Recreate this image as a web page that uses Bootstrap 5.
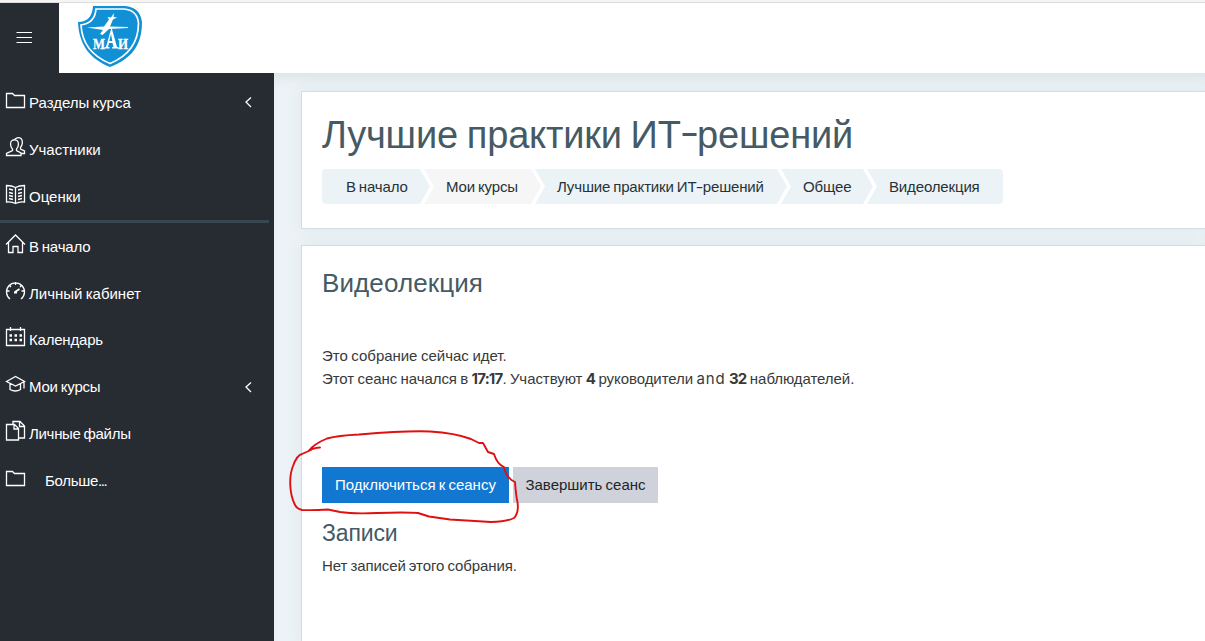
<!DOCTYPE html>
<html lang="ru">
<head>
<meta charset="utf-8">
<meta name="viewport" content="width=device-width, initial-scale=1">
<title>Видеолекция</title>
<link href="https://cdn.jsdelivr.net/npm/bootstrap@5.3.0/dist/css/bootstrap.min.css" rel="stylesheet">
<style>
body{font-family:"Liberation Sans",Arial,sans-serif;font-size:15px;line-height:23px;color:#373a3c;background:#ecf3f7;height:641px}
.topline{height:3px;background:#f5f5f5;border-bottom:1px solid #dcdcdc}
.site-head{height:70px}
.menu-btn{width:59px;background:#272b32;padding:9px 0 0 16px}
.brand-logo{margin:2px 0 0 18px}
.side{width:274px;background:#272b32;padding-top:6px}
.side-link{height:46.9px;padding:0 21px 0 5px;color:#fff;text-decoration:none}
.side-link .ico{width:21px;height:22px;margin:-5px 3px 0 0;flex:none}
.ico,.line-ico{fill:none;stroke:#fff;stroke-width:1.3}
.side-rule{height:3px;width:269px;background:#37474f}
.snug{word-spacing:-1px}
.tight{letter-spacing:-.2px}
.tighter{letter-spacing:-.3px}
.main-area{padding:18px 0 0 27px;box-shadow:inset 0 12px 14px -8px rgba(60,80,90,.1);min-width:0}
.panel{background:#fff;border:1px solid #d3dce2;border-right:0;box-shadow:0 0 16px rgba(60,90,105,.07);padding-left:20px;white-space:nowrap}
.panel-head{height:138px}
.panel-body{border-bottom:0}
h1,h2,h3{color:#455a64;font-weight:400;margin:0}
h1{font-size:38px;line-height:44px;padding-top:21px;letter-spacing:-.18px;word-spacing:-1.5px}
h2{font-size:26px;line-height:30px;padding-top:22px;letter-spacing:.1px}
h3{font-size:23px;line-height:28px;margin-top:16px;letter-spacing:-.15px}
.wide-dash{display:inline-block;transform:scaleX(1.5);margin:0 .05em}
h1 .wide-dash{transform:translateY(-3px) scaleX(1.5)}
.crumbs{margin-top:12px;height:35px;color:#263238}
.crumb{height:35px;line-height:35px;background:#ecf3f7;clip-path:polygon(0 0,calc(100% - 10px) 0,100% 50%,calc(100% - 10px) 100%,0 100%,10px 50%);margin-right:-6px;padding-left:22px;flex:none;letter-spacing:-.15px;word-spacing:-1px}
.crumb:first-child{clip-path:polygon(0 0,calc(100% - 10px) 0,100% 50%,calc(100% - 10px) 100%,0 100%);border-radius:4px 0 0 4px;padding-left:24px}
.crumb:last-child{clip-path:polygon(0 0,100% 0,100% 100%,0 100%,10px 50%);border-radius:0 4px 4px 0;margin-right:0}
.status{margin-top:46px}
.line-start{letter-spacing:-.03px;word-spacing:-.5px}
.line-stats{letter-spacing:-.06px;word-spacing:-.75px}
.status b,.latin{font-family:Inter,sans-serif}
.status b{font-weight:700;letter-spacing:-.8px}
.latin{letter-spacing:.9px}
.actions{margin-top:77px;gap:4px}
.actions .btn{height:36px;padding:0;font-size:15px;line-height:34px;border-radius:0;word-spacing:-1px}
.join{width:187px;background:#1177d1;color:#fff}
.finish{width:145px;background:#cfd2da;color:#212529}
.records{margin-top:7px;letter-spacing:-.08px;word-spacing:-1px}
.marker{left:280px;top:420px}
</style>
</head>
<body class="d-flex flex-column overflow-hidden">
<div class="topline flex-shrink-0"></div>
<header class="site-head d-flex bg-white flex-shrink-0">
  <div class="menu-btn"><svg class="line-ico" width="16" height="50"><path d="M.5 20.5h15.5M.5 25.5h15.5M.5 30.5h15.5" stroke-width="1"/></svg></div>
  <svg class="brand-logo" width="66" height="64" viewBox="0 0 66 64">
    <path fill="#1190d6" d="M16 1H48Q63 2 65 17C65 41 54 54 33 62C13 54 2 40 1 17Q15 17 16 1Z"/>
    <path fill="none" stroke="#fff" stroke-width="1.7" d="M19 4H47Q60 5 61.5 18C61.500 39 51 51 33 58.500C15 51 5 39 4 20Q18 18 19 4Z"/>
    <path fill="#fff" d="M10 22.500L27 21.500L32 14.500L30.500 12L34 12.500L37 8L36.500 12L40 12.500L36 14.500L33 21.500L51 22V23L32 24L25.500 30L23 29L26 25Z"/>
    <path fill="#fff" fill-rule="evenodd" d="M34.500 22.500L40 42H41.500V43.500H35V42H36.500L35.500 38H32L31 42H32.500V43.500H27.500V42H29ZM34 29L32.300 36H35.300Z"/>
    <g fill="#fff" stroke="#fff" stroke-width=".3" font-family="Liberation Serif,serif" font-weight="700"><text x="16" y="43.500" font-size="15" textLength="12" lengthAdjust="spacingAndGlyphs">М</text><text x="41" y="43.500" font-size="15" textLength="10" lengthAdjust="spacingAndGlyphs">И</text></g>
  </svg>
</header>
<div class="d-flex flex-grow-1">
  <nav class="side flex-shrink-0">
    <a class="side-link d-flex align-items-center" href="#"><svg class="ico" viewBox="0 0 21 22"><path d="M1.500 4.500H7.500L9.500 6.500H19.500V18.500H1.500Z"/></svg><span class="snug">Разделы курса</span><svg class="line-ico ms-auto" width="10" height="12"><path d="M8 1.500L3 6L8 11"/></svg></a>
    <a class="side-link d-flex align-items-center" href="#"><svg class="ico" viewBox="0 0 21 22"><path d="M1.500 19.500V17.500L7.500 14.500V13C5 10.500 5 5.500 7 4.500Q9.500 3 12 4.500C14 6 14 10.500 11.500 13V14.500L16 17V19.500ZM9.500 3.500Q13 .500 16 2.500C18.500 5 17 10 15.500 11.500V13L19.500 15V17.500H16"/></svg><span>Участники</span></a>
    <a class="side-link d-flex align-items-center" href="#"><svg class="ico" viewBox="0 0 21 22"><path d="M10.500 4.500V20.500M1.500 2.500Q7 2.500 10.500 4.500Q14 2.500 19.500 2.500V19Q14 18.500 10.500 20.500Q7 18.500 1.500 19ZM4 6L8 7M4 9.500L8 10.500M4 12.500L8 13.500M4 15.500L8 16.500M17 6L13 7M17 9.500L13 10.500M17 12.500L13 13.500M17 15.500L13 16.500"/></svg><span>Оценки</span></a>
    <div class="side-rule"></div>
    <a class="side-link d-flex align-items-center" href="#"><svg class="ico" viewBox="0 0 21 22"><path d="M1 11.500L10.500 2L20 11.500M3.500 9.500V19.500H8V13.500H13V19.500H17.500V9.500"/></svg><span class="snug tight">В начало</span></a>
    <a class="side-link d-flex align-items-center" href="#"><svg class="ico" viewBox="0 0 21 22"><path d="M5 19A9 9 0 1 1 16 19M10.500 2V5M2 11H4.500M16.500 11H19M4 5L6 7M17 5L15 7"/><path stroke-width="1.800" d="M10 12L14.500 9M9 12.500H12"/></svg><span class="snug">Личный кабинет</span></a>
    <a class="side-link d-flex align-items-center" href="#"><svg class="ico" viewBox="0 0 21 22"><path d="M1.500 3.500H19.500V19.500H1.500ZM5.500 1V5M15.500 1V5"/><path stroke-width="2.500" stroke-dasharray="2.500 2.500" d="M4.500 9.500H17M4.500 14H17"/></svg><span class="tight">Календарь</span></a>
    <a class="side-link d-flex align-items-center" href="#"><svg class="ico" viewBox="0 0 21 22"><path d="M1.500 8.500L10.500 3.500L19.500 8.500L10.500 13ZM5 10.500V16.500Q10.500 19.500 15.500 16.500V10.500M19 9V15.500"/></svg><span class="snug tight">Мои курсы</span><svg class="line-ico ms-auto" width="10" height="12"><path d="M8 1.500L3 6L8 11"/></svg></a>
    <a class="side-link d-flex align-items-center" href="#"><svg class="ico" viewBox="0 0 21 22"><path d="M1.500 4.500H9.500L13.500 8.500V20H1.500ZM9 5V9H13.500M8 4V1.500H15L19.500 6V18H14M14.500 2V6.500H19.500"/></svg><span class="snug tighter">Личные файлы</span></a>
    <a class="side-link d-flex align-items-center" href="#"><svg class="ico" viewBox="0 0 21 22"><path d="M1.500 4.500H7.500L9.500 6.500H19.500V18.500H1.500Z"/></svg><span class="ms-3 tighter">Больше<span style="letter-spacing:-1.4px">...</span></span></a>
  </nav>
  <main class="main-area flex-grow-1 d-flex flex-column">
    <section class="panel panel-head">
      <h1>Лучшие практики ИТ<span class="wide-dash">-</span>решений</h1>
      <div class="crumbs d-flex">
        <div class="crumb" style="width:108px">В начало</div>
        <div class="crumb" style="width:117px;background:#f6f6f6">Мои курсы</div>
        <div class="crumb" style="width:252px">Лучшие практики ИТ<span class="wide-dash">-</span>решений</div>
        <div class="crumb" style="width:92px">Общее</div>
        <div class="crumb" style="width:136px">Видеолекция</div>
      </div>
    </section>
    <section class="panel panel-body flex-grow-1 mt-3">
      <h2>Видеолекция</h2>
      <div class="status"><span class="line-start">Это собрание сейчас идет.</span><br><span class="line-stats">Этот сеанс начался в <b>17:17</b>. Участвуют <b>4</b> руководители <span class="latin">and</span> <b>32</b> наблюдателей.</span></div>
      <div class="actions d-flex"><button class="btn join">Подключиться к сеансу</button><button class="btn finish">Завершить сеанс</button></div>
      <h3>Записи</h3>
      <div class="records">Нет записей этого собрания.</div>
    </section>
  </main>
</div>
<svg class="marker position-absolute" width="250" height="110" fill="none" stroke="#e01010" stroke-width="1.900" stroke-linejoin="round" stroke-linecap="round"><path d="M40 27.500Q33 28 29 30.500Q34 24 47 18.500Q58 15.500 79 14.500Q127 10.500 150 11.500Q175 13 191 19L199 23L203 23L208 32L214 34Q217 44 224 47Q226 58 235 62Q236 76 237.500 82Q239 93 234 98Q226 102 211 102L170 99.500L149 96.500L138 93Q125 92 97 93Q73 94 60 92L48 89.500Q33 90.500 22 90Q17 89 15 85C9 73 9 56 13 46Q17 35 22 34L31 30"/></svg>
<script src="https://cdn.jsdelivr.net/npm/bootstrap@5.3.0/dist/js/bootstrap.bundle.min.js"></script>
</body>
</html>
